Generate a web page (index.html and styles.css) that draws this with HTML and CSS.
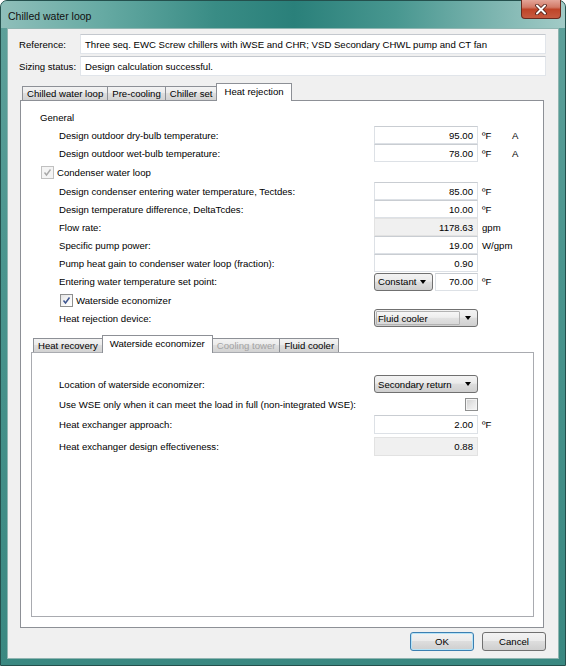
FILE: index.html
```html
<!DOCTYPE html>
<html>
<head>
<meta charset="utf-8">
<link rel="stylesheet" href="styles.css">
</head>
<body>
<div class="window">
  <div class="titlebar">
    <span class="title">Chilled water loop</span>
    <div class="close">
      <svg width="14" height="11" viewBox="0 0 14 11"><path d="M3 1.5 L11 9.5 M11 1.5 L3 9.5" stroke="#4a1a12" stroke-width="3.6" stroke-linecap="round"/><path d="M3 1.5 L11 9.5 M11 1.5 L3 9.5" stroke="#fff" stroke-width="2" stroke-linecap="round"/></svg>
    </div>
  </div>
  <div class="client">
    <div class="frow"><label>Reference:</label><div class="tbox">Three seq. EWC Screw chillers with iWSE and CHR; VSD Secondary CHWL pump and CT fan</div></div>
    <div class="frow"><label>Sizing status:</label><div class="tbox">Design calculation successful.</div></div>

    <div class="tabstrip top">
      <div class="tab">Chilled water loop</div>
      <div class="tab">Pre-cooling</div>
      <div class="tab">Chiller set</div>
      <div class="tab active">Heat rejection</div>
    </div>
    <div class="panel outer">
      <div class="row h">General</div>
      <div class="row ind"><span class="lbl">Design outdoor dry-bulb temperature:</span><div class="num">95.00</div><span class="unit">ºF</span><span class="flag">A</span></div>
      <div class="row ind"><span class="lbl">Design outdoor wet-bulb temperature:</span><div class="num">78.00</div><span class="unit">ºF</span><span class="flag">A</span></div>
      <div class="row chk tall"><span class="cb dis"><svg width="11" height="11" viewBox="0 0 11 11"><path d="M2.5 5.5 L4.5 8 L8.5 2.5" fill="none" stroke="#a8a8a8" stroke-width="1.4"/></svg></span><span class="cbl">Condenser water loop</span></div>
      <div class="row ind"><span class="lbl">Design condenser entering water temperature, Tectdes:</span><div class="num">85.00</div><span class="unit">ºF</span></div>
      <div class="row ind"><span class="lbl">Design temperature difference, DeltaTcdes:</span><div class="num">10.00</div><span class="unit">ºF</span></div>
      <div class="row ind"><span class="lbl">Flow rate:</span><div class="num ro">1178.63</div><span class="unit">gpm</span></div>
      <div class="row ind"><span class="lbl">Specific pump power:</span><div class="num">19.00</div><span class="unit">W/gpm</span></div>
      <div class="row ind"><span class="lbl">Pump heat gain to condenser water loop (fraction):</span><div class="num">0.90</div></div>
      <div class="row ind r19"><span class="lbl">Entering water temperature set point:</span><div class="sel w59"><span class="stext">Constant</span><span class="arr"></span></div><div class="num w43">70.00</div><span class="unit">ºF</span></div>
      <div class="row ind chk"><span class="cb"><svg width="11" height="11" viewBox="0 0 11 11"><path d="M2.5 5.5 L4.5 8 L8.5 2.5" fill="none" stroke="#3d5590" stroke-width="1.5"/></svg></span><span class="cbl">Waterside economizer</span></div>
      <div class="row ind"><span class="lbl">Heat rejection device:</span><div class="sel combo"><span class="fld">Fluid cooler</span><span class="arr"></span></div></div>

      <div class="tabstrip inner">
        <div class="tab">Heat recovery</div>
        <div class="tab active">Waterside economizer</div>
        <div class="tab dim">Cooling tower</div>
        <div class="tab">Fluid cooler</div>
      </div>
      <div class="panel innerp">
        <div class="irow"><span class="lbl">Location of waterside economizer:</span><div class="sel"><span class="stext">Secondary return</span><span class="arr"></span></div></div>
        <div class="irow"><span class="lbl">Use WSE only when it can meet the load in full (non-integrated WSE):</span><div class="cbslot"><span class="cb off"></span></div></div>
        <div class="irow"><span class="lbl">Heat exchanger approach:</span><div class="num">2.00</div><span class="unit">ºF</span></div>
        <div class="irow last"><span class="lbl">Heat exchanger design effectiveness:</span><div class="num ro">0.88</div></div>
      </div>
    </div>

    <div class="btns">
      <div class="btn default">OK</div>
      <div class="btn">Cancel</div>
    </div>
  </div>
</div>
</body>
</html>
```

FILE: styles.css
```css
* { box-sizing: border-box; }
html, body { margin: 0; padding: 0; }
body {
  width: 566px;
  height: 666px;
  overflow: hidden;
  background: #ffffff;
  font-family: "Liberation Sans", Arial, sans-serif;
  font-size: 9.6px;
  color: #000;
}

.window {
  width: 566px;
  height: 666px;
  border: 1px solid #24504d;
  border-radius: 7px 7px 0 0;
  padding: 0 6px 6px;
  background: linear-gradient(180deg, #5fa19b 0%, #4a958e 40%, #3a8881 100%);
  display: flex;
  flex-direction: column;
}

.titlebar {
  height: 27px;
  margin: 0 -6px;
  padding: 0 7px;
  display: flex;
  align-items: center;
  position: relative;
  border-radius: 6px 6px 0 0;
  background: linear-gradient(90deg, #8fbfba 0%, #66aaa3 18%, #398c85 38%, #2a807a 52%, #489790 70%, #7fb6b1 88%, #a2cbc7 100%);
}
.title {
  font-size: 10.5px;
  color: #101010;
  padding-top: 2px;
}
.close {
  position: absolute;
  right: 4px;
  top: -1px;
  width: 40px;
  height: 19px;
  border: 1px solid #6a2a1f;
  border-top: none;
  border-radius: 0 0 4px 4px;
  background: linear-gradient(180deg, #e4a598 0%, #d27a67 40%, #bf4428 52%, #c65a40 100%);
  display: flex;
  align-items: center;
  justify-content: center;
}

.client {
  flex: 1;
  background: #f0f0f0;
  border: 1px solid #8fb5b1;
  padding: 5px 12px 7px 11px;
  display: flex;
  flex-direction: column;
}

.frow {
  display: flex;
  align-items: center;
  height: 20px;
  margin-bottom: 2px;
}
.frow label { width: 61px; }
.tbox {
  flex: 1;
  height: 20px;
  background: #fff;
  border: 1px solid #e1e5ea;
  border-top-color: #c4c8ce;
  padding: 0 4px;
  display: flex;
  align-items: center;
}

.tabstrip {
  display: flex;
  align-items: flex-end;
  height: 17px;
  position: relative;
  z-index: 1;
}
.tabstrip.top { margin: 5px 0 0 3px; }
.tabstrip.inner { margin: 8px 0 0 2px; }
.tab {
  height: 14px;
  border: 1px solid #8d9096;
  border-bottom: none;
  margin-right: -1px;
  padding: 0 4px;
  background: linear-gradient(180deg, #f3f3f3 0%, #ebebeb 45%, #dedede 50%, #d2d2d2 100%);
  display: flex;
  align-items: center;
  white-space: nowrap;
}
.tab.active {
  height: 18px;
  margin-bottom: -1px;
  background: #fff;
  padding: 0 7px 2px;
  position: relative;
  z-index: 2;
}
.tab.dim { color: #a3a3a3; }

.panel {
  background: #fff;
  border: 1px solid #8d9096;
}
.panel.outer {
  flex: 1;
  width: 524px;
  margin-left: 1px;
  padding: 7px 9px 10px 10px;
  display: flex;
  flex-direction: column;
}
.panel.innerp {
  flex: 1;
  width: 503px;
  border-color: #a9abb0;
  padding: 21px 0 0 27px;
}

.row {
  display: flex;
  align-items: center;
  height: 18px;
  white-space: nowrap;
}
.row.h { padding-left: 9px; }
.row.ind { padding-left: 28px; }
.row.chk { padding-left: 10px; }
.row.ind.chk { padding-left: 29px; }
.row.tall { height: 20px; }
.row.r19 { height: 19px; }

.lbl { width: 315px; flex: none; }
.cbl { margin-left: 3px; }

.num {
  width: 104px;
  height: 18px;
  flex: none;
  background: #fff;
  border: 1px solid #dde1e6;
  border-top-color: #c9cdd2;
  display: flex;
  align-items: center;
  justify-content: flex-end;
  padding-right: 4px;
}
.num.ro { background: #f0f0f0; border-color: #e2e2e2; }
.num.w43 { width: 43px; margin-left: 2px; }
.unit { margin-left: 4px; width: 30px; flex: none; }

.sel {
  width: 104px;
  height: 18px;
  flex: none;
  border: 1px solid #707070;
  border-radius: 3px;
  background: linear-gradient(180deg, #f3f3f3 0%, #ebebeb 45%, #dddddd 50%, #cfcfcf 100%);
  display: flex;
  align-items: center;
  padding-left: 3px;
}
.sel.w59 { width: 59px; }
.stext { white-space: nowrap; }
.arr {
  margin-left: auto;
  margin-right: 6px;
  width: 0;
  height: 0;
  border-left: 3.5px solid transparent;
  border-right: 3.5px solid transparent;
  border-top: 4px solid #000;
  flex: none;
}
.sel.combo { padding: 1px; }
.sel.combo .fld {
  flex: 1;
  height: 100%;
  border: 1px solid #b3b3b3;
  border-radius: 1px;
  padding-left: 1px;
  display: flex;
  align-items: center;
  background: linear-gradient(180deg, #f6f6f6 0%, #eeeeee 45%, #e2e2e2 50%, #d8d8d8 100%);
}
.sel.combo .arr { margin: 0 5px 0 5px; }

.cb {
  width: 13px;
  height: 13px;
  flex: none;
  border: 1px solid #8e8f8f;
  background: linear-gradient(135deg, #e4e4e4 0%, #f7f7f7 60%, #ffffff 100%);
  display: inline-flex;
  align-items: center;
  justify-content: center;
}
.cb.dis { border-color: #c0c0c0; background: #f4f4f4; }
.cb.off {
  background: linear-gradient(135deg, #cfcfcf 0%, #e8e8e8 55%, #f6f6f6 100%);
  box-shadow: inset 0 0 0 1px #f4f4f4;
}

.irow {
  display: flex;
  align-items: center;
  height: 20px;
  white-space: nowrap;
}
.irow.last { margin-top: 2px; }
.irow .num { height: 19px; }
.cbslot {
  width: 104px;
  display: flex;
  justify-content: flex-end;
}

.btns {
  display: flex;
  justify-content: flex-end;
  gap: 8px;
  margin-top: 4px;
}
.btn {
  width: 64px;
  height: 19px;
  border: 1px solid #707070;
  border-radius: 3px;
  background: linear-gradient(180deg, #f3f3f3 0%, #ebebeb 45%, #dddddd 50%, #cfcfcf 100%);
  display: flex;
  align-items: center;
  justify-content: center;
}
.btn.default {
  border-color: #3c7fb1;
  box-shadow: inset 0 0 0 1px #b5e3f7;
}
```
